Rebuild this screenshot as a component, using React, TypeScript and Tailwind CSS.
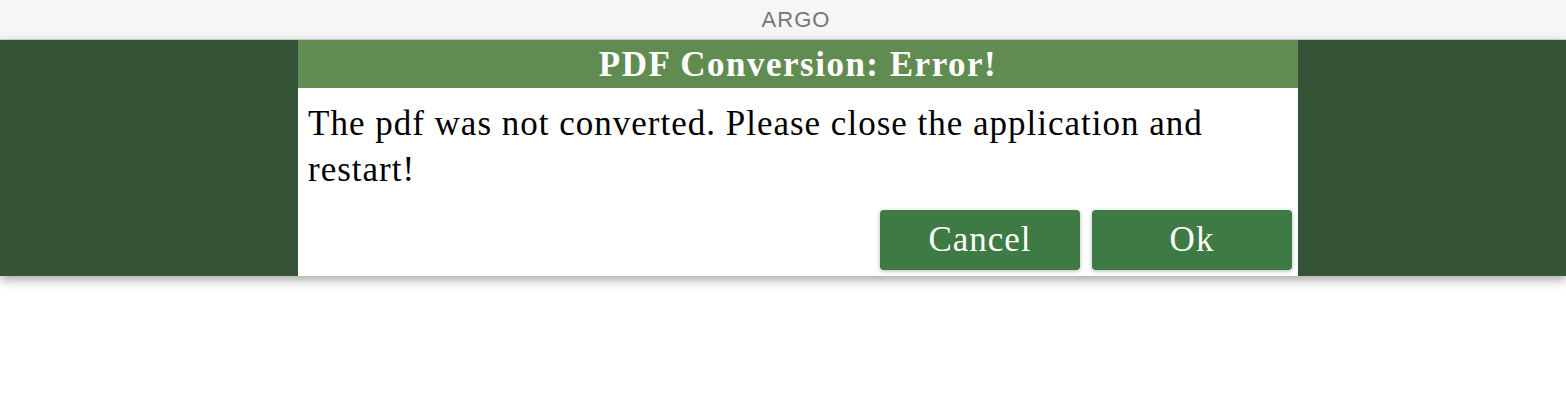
import React from "react";

export default function App() {
  const serif = { fontFamily: '"Liberation Serif", "DejaVu Serif", serif' } as React.CSSProperties;
  return (
    <div className="w-[1566px] h-[408px] bg-white overflow-hidden">
      <div className="h-[40px] bg-[#f6f6f6] border-b border-[#d6d6d6] flex items-center justify-center pl-[26px]">
        <span className="text-[22px] text-[#777777] tracking-[1px]" style={{ fontFamily: '"Liberation Sans", Arial, sans-serif' }}>ARGO</span>
      </div>
      <div className="h-[236px] bg-[#355337] shadow-[0_4px_10px_rgba(0,0,0,0.35)] relative">
        <div className="ml-[298px] w-[1000px] h-full bg-white flex flex-col" style={serif}>
          <div className="h-[48px] bg-[#618c51] flex items-center justify-center">
            <span className="text-white font-bold text-[35px] tracking-[1.5px] leading-none">PDF Conversion: Error!</span>
          </div>
          <p className="text-black text-[35px] tracking-[1px] leading-[46px] px-[10px] pt-[13px]">
            The pdf was not converted. Please close the application and restart!
          </p>
          <div className="mt-auto flex justify-end gap-[12px] pr-[6px] pb-[6px]">
            <button className="w-[200px] h-[60px] bg-[#3e7a44] text-white text-[35px] tracking-[1px] rounded-[4px] shadow-[0_1px_4px_rgba(0,0,0,0.3)]" style={serif}>Cancel</button>
            <button className="w-[200px] h-[60px] bg-[#3e7a44] text-white text-[35px] tracking-[1px] rounded-[4px] shadow-[0_1px_4px_rgba(0,0,0,0.3)]" style={serif}>Ok</button>
          </div>
        </div>
      </div>
    </div>
  );
}
